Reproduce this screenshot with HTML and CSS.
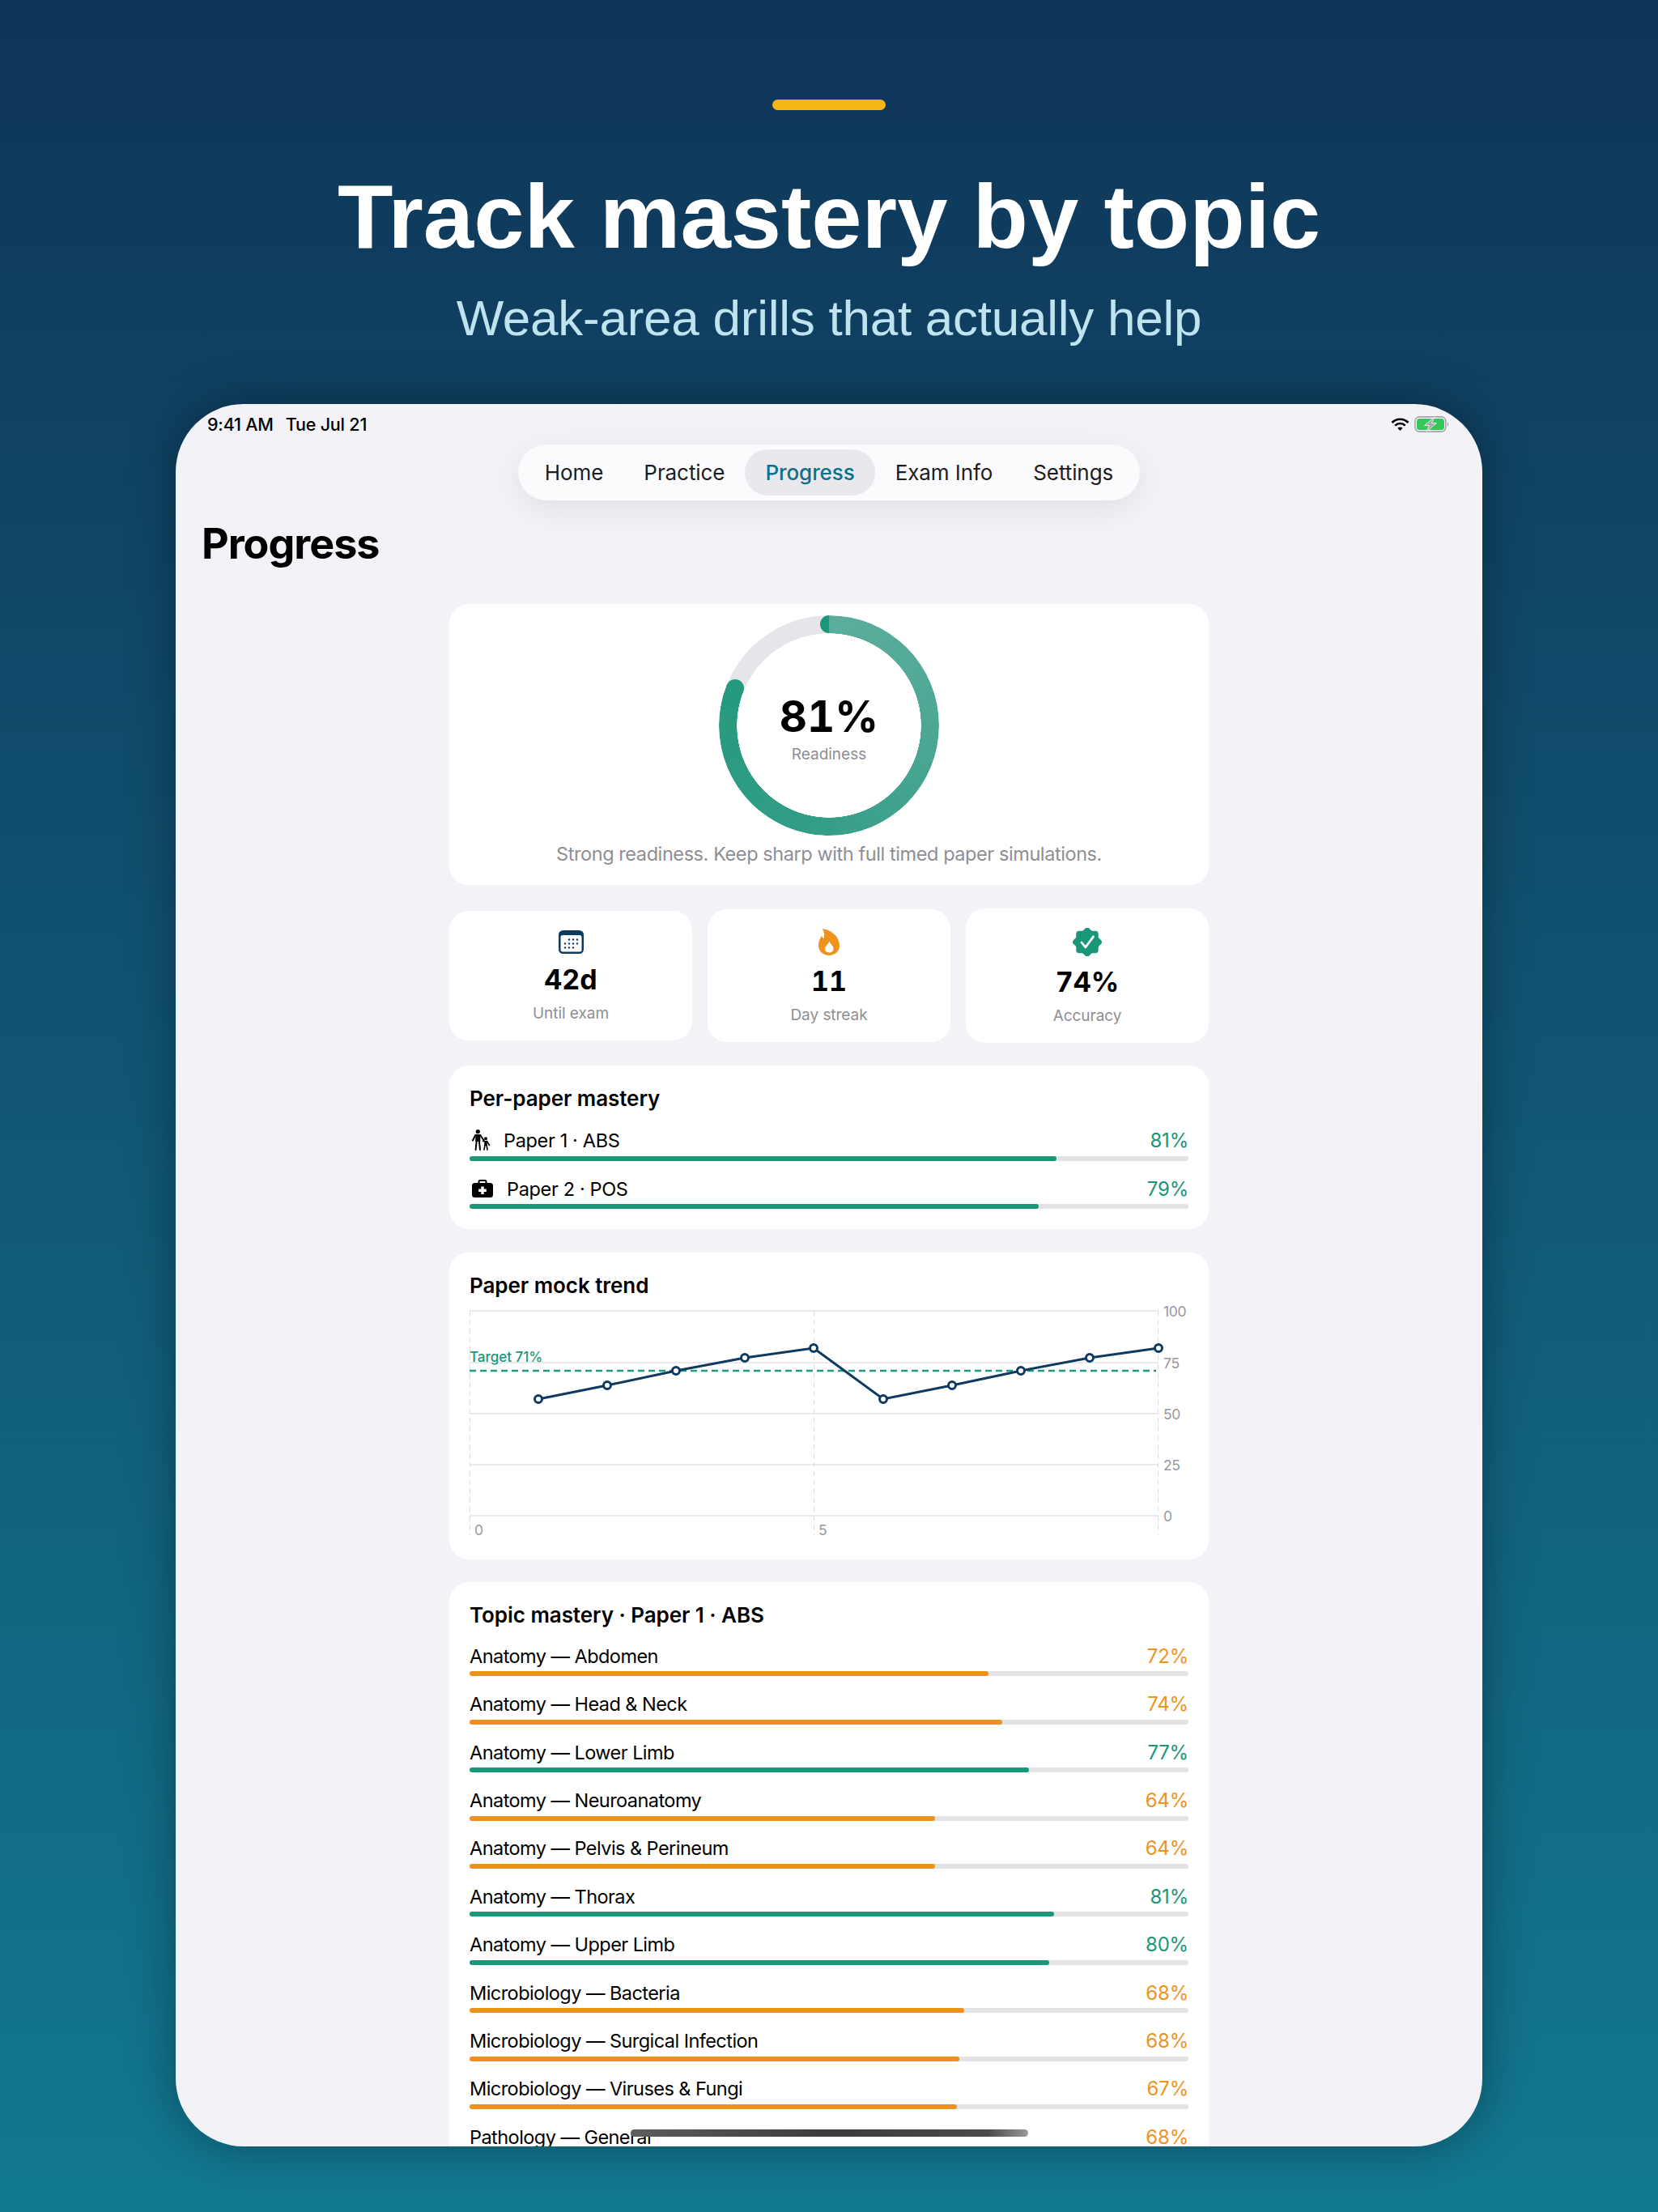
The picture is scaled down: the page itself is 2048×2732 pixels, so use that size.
FILE: index.html
```html
<!DOCTYPE html>
<html lang="en">
<head>
    <meta charset="UTF-8">
    <meta name="viewport" content="width=device-width, initial-scale=1.0">
    <title>Track mastery by topic</title>
    <link rel="stylesheet" href="styles.css">
</head>
<body>
    <header class="hero">
        <div class="accent-bar"></div>
        <h1>Track mastery by topic</h1>
        <p>Weak-area drills that actually help</p>
    </header>

    <main class="device">
        <div class="status-bar">
            <div class="status-time"><span>9:41 AM</span><span>Tue Jul 21</span></div>
            <div class="status-icons">
                <svg width="23" height="16" viewBox="0 0 23 16">
                    <path d="M1.5 6 A14 14 0 0 1 21.5 6" fill="none" stroke="#000" stroke-width="2.6"/>
                    <path d="M5.2 9.6 A9 9 0 0 1 17.8 9.6" fill="none" stroke="#000" stroke-width="2.6"/>
                    <path d="M11.5 16 L8.4 12.7 A4.4 4.4 0 0 1 14.6 12.7 Z" fill="#000"/>
                </svg>
                <svg width="43" height="20" viewBox="0 0 43 20">
                    <rect x="0.9" y="0.9" width="38" height="18.2" rx="5.5" fill="#fff" stroke="#a3a3a8" stroke-width="1.6"/>
                    <rect x="3" y="3" width="34" height="14" rx="3.5" fill="#34c759"/>
                    <path d="M41 7 q2 3 0 6 z" fill="#8e8e93"/>
                    <path d="M25 1 L12.5 11.5 H18.5 L15 19 L27.5 8.5 H21.5 Z" fill="#a8a8ad" stroke="#fff" stroke-width="0.8"/>
                </svg>
            </div>
        </div>

        <nav class="tabs">
            <a>Home</a>
            <a>Practice</a>
            <a class="active">Progress</a>
            <a>Exam Info</a>
            <a>Settings</a>
        </nav>

        <h2 class="page-title">Progress</h2>

        <div class="content">
            <section class="card readiness">
                <div class="ring">
                    <span class="cap-start"></span>
                    <span class="cap-end"></span>
                    <div class="ring-value">81%</div>
                    <div class="ring-label">Readiness</div>
                </div>
                <p class="readiness-note">Strong readiness. Keep sharp with full timed paper simulations.</p>
            </section>

            <div class="stats">
                <div class="card stat">
                    <svg class="stat-icon" width="31" height="29" viewBox="0 0 31 29">
                        <rect width="31" height="29" rx="5.5" fill="#0f3a5f"/>
                        <rect x="2.5" y="6" width="26" height="20.5" rx="2.5" fill="#fff"/>
                        <g fill="#0f3a5f">
                            <circle cx="13" cy="11.5" r="1.2"/><circle cx="18" cy="11.5" r="1.2"/><circle cx="23" cy="11.5" r="1.2"/>
                            <circle cx="8" cy="16.4" r="1.2"/><circle cx="13" cy="16.4" r="1.2"/><circle cx="18" cy="16.4" r="1.2"/><circle cx="23" cy="16.4" r="1.2"/>
                            <circle cx="8" cy="21.4" r="1.2"/><circle cx="13" cy="21.4" r="1.2"/><circle cx="18" cy="21.4" r="1.2"/>
                        </g>
                    </svg>
                    <div class="stat-value">42d</div>
                    <div class="stat-label">Until exam</div>
                </div>
                <div class="card stat">
                    <svg class="stat-icon" width="26" height="33" viewBox="0 0 26 33">
                        <path d="M4.5 0 C15 1.5 26 9 26 21 C26 28 20 33 13 33 C6 33 0 28 0 20.5 C0 15.5 2 12.5 3.5 9 C4.5 10.5 5.5 11.5 6.5 12 C7.5 8 7.5 4 4.5 0 Z" fill="#ef931f"/>
                        <path d="M13.5 15.5 C14 19 18.5 20.5 18.5 24.5 C18.5 27.5 16.5 29.5 13.3 29.5 C10 29.5 8 27.5 8 24.8 C8 21.5 12 19.5 13.5 15.5 Z" fill="#fff"/>
                    </svg>
                    <div class="stat-value">11</div>
                    <div class="stat-label">Day streak</div>
                </div>
                <div class="card stat">
                    <svg class="stat-icon" width="36" height="35" viewBox="0 0 36 35">
                        <g fill="#1a9678">
                            <rect x="4.25" y="3.75" width="27.5" height="27.5" rx="4"/>
                            <rect x="4.25" y="3.75" width="27.5" height="27.5" rx="4" transform="rotate(45 18 17.5)"/>
                        </g>
                        <path d="M11 18 L15.8 24 L25.5 10.8" fill="none" stroke="#fff" stroke-width="2.8" stroke-linecap="round" stroke-linejoin="round"/>
                    </svg>
                    <div class="stat-value">74%</div>
                    <div class="stat-label">Accuracy</div>
                </div>
            </div>

            <section class="card">
                <h3>Per-paper mastery</h3>
                <div class="meter meter-tall">
                    <div class="meter-head">
                        <span class="meter-name paper-name">
                            <svg class="paper-one" width="23" height="26" viewBox="0 0 23 26">
                                <circle cx="7.3" cy="2.6" r="2.6"/>
                                <path d="M4.4 6 H10.2 L10.4 15 H4.2 Z"/>
                                <path d="M4.2 7 L1 13.5 M10.4 7 L14.5 13.5 M5.7 14 L4.6 25 M8.9 14 L10 25" fill="none" stroke="#000" stroke-width="2" stroke-linecap="round"/>
                                <circle cx="17" cy="11.2" r="2"/>
                                <path d="M15.3 14 H18.7 V20 H15.3 Z"/>
                                <path d="M15.5 14.5 L13.6 14.5 M18.5 14.5 L21.5 19.5 M16 19 L15 25 M18 19 L19 25" fill="none" stroke="#000" stroke-width="1.6" stroke-linecap="round"/>
                            </svg>
                            Paper 1 · ABS
                        </span>
                        <span class="pct good">81%</span>
                    </div>
                    <div class="track"><div class="fill good" style="width: 81.6%"></div></div>
                </div>
                <div class="meter">
                    <div class="meter-head">
                        <span class="meter-name paper-name">
                            <svg class="paper-two" width="26" height="22" viewBox="0 0 26 22">
                                <path d="M8.5 5 V2.5 Q8.5 1 10 1 H16 Q17.5 1 17.5 2.5 V5" fill="none" stroke="#000" stroke-width="2"/>
                                <rect y="4" width="26" height="18" rx="3.5"/>
                                <path d="M11.3 8.5 H14.7 V11.5 H17.8 V14.9 H14.7 V18 H11.3 V14.9 H8.2 V11.5 H11.3 Z" fill="#fff"/>
                            </svg>
                            Paper 2 · POS
                        </span>
                        <span class="pct good">79%</span>
                    </div>
                    <div class="track"><div class="fill good" style="width: 79.2%"></div></div>
                </div>
            </section>

            <section class="card">
                <h3>Paper mock trend</h3>
                <svg class="trend" width="888" height="296" viewBox="0 -6 888 296">
                    <g class="grid-y">
                        <line x1="0" x2="851" y1="8" y2="8"/>
                        <line x1="0" x2="851" y1="72" y2="72"/>
                        <line x1="0" x2="851" y1="135" y2="135"/>
                        <line x1="0" x2="851" y1="198" y2="198"/>
                        <line x1="0" x2="851" y1="261" y2="261"/>
                    </g>
                    <g class="grid-x">
                        <line x1="0.5" x2="0.5" y1="8" y2="285"/>
                        <line x1="425.5" x2="425.5" y1="8" y2="285"/>
                        <line x1="850.5" x2="850.5" y1="8" y2="285"/>
                    </g>
                    <line class="target" x1="0" x2="848" y1="82" y2="82"/>
                    <text class="target-label" x="0" y="71">Target 71%</text>
                    <polyline class="trend-line" points="85,117 170,100 255,82 340,66 425,54 511,117 596,100 681,82 766,66 851,54"/>
                    <g class="trend-dots">
                        <circle cx="85" cy="117" r="4.5"/><circle cx="170" cy="100" r="4.5"/><circle cx="255" cy="82" r="4.5"/>
                        <circle cx="340" cy="66" r="4.5"/><circle cx="425" cy="54" r="4.5"/><circle cx="511" cy="117" r="4.5"/>
                        <circle cx="596" cy="100" r="4.5"/><circle cx="681" cy="82" r="4.5"/><circle cx="766" cy="66" r="4.5"/>
                        <circle cx="851" cy="54" r="4.5"/>
                    </g>
                    <g class="axis-label">
                        <text x="857" y="15">100</text>
                        <text x="857" y="79">75</text>
                        <text x="857" y="142">50</text>
                        <text x="857" y="205">25</text>
                        <text x="857" y="268">0</text>
                        <text x="6" y="285">0</text>
                        <text x="431" y="285">5</text>
                    </g>
                </svg>
            </section>

            <section class="card">
                <h3>Topic mastery · Paper 1 · ABS</h3>
                <div class="meter">
                    <div class="meter-head"><span class="meter-name">Anatomy — Abdomen</span><span class="pct warn">72%</span></div>
                    <div class="track"><div class="fill warn" style="width: 72.2%"></div></div>
                </div>
                <div class="meter">
                    <div class="meter-head"><span class="meter-name">Anatomy — Head &amp; Neck</span><span class="pct warn">74%</span></div>
                    <div class="track"><div class="fill warn" style="width: 74.1%"></div></div>
                </div>
                <div class="meter">
                    <div class="meter-head"><span class="meter-name">Anatomy — Lower Limb</span><span class="pct good">77%</span></div>
                    <div class="track"><div class="fill good" style="width: 77.8%"></div></div>
                </div>
                <div class="meter">
                    <div class="meter-head"><span class="meter-name">Anatomy — Neuroanatomy</span><span class="pct warn">64%</span></div>
                    <div class="track"><div class="fill warn" style="width: 64.7%"></div></div>
                </div>
                <div class="meter">
                    <div class="meter-head"><span class="meter-name">Anatomy — Pelvis &amp; Perineum</span><span class="pct warn">64%</span></div>
                    <div class="track"><div class="fill warn" style="width: 64.7%"></div></div>
                </div>
                <div class="meter">
                    <div class="meter-head"><span class="meter-name">Anatomy — Thorax</span><span class="pct good">81%</span></div>
                    <div class="track"><div class="fill good" style="width: 81.3%"></div></div>
                </div>
                <div class="meter">
                    <div class="meter-head"><span class="meter-name">Anatomy — Upper Limb</span><span class="pct good">80%</span></div>
                    <div class="track"><div class="fill good" style="width: 80.6%"></div></div>
                </div>
                <div class="meter">
                    <div class="meter-head"><span class="meter-name">Microbiology — Bacteria</span><span class="pct warn">68%</span></div>
                    <div class="track"><div class="fill warn" style="width: 68.8%"></div></div>
                </div>
                <div class="meter">
                    <div class="meter-head"><span class="meter-name">Microbiology — Surgical Infection</span><span class="pct warn">68%</span></div>
                    <div class="track"><div class="fill warn" style="width: 68.1%"></div></div>
                </div>
                <div class="meter">
                    <div class="meter-head"><span class="meter-name">Microbiology — Viruses &amp; Fungi</span><span class="pct warn">67%</span></div>
                    <div class="track"><div class="fill warn" style="width: 67.8%"></div></div>
                </div>
                <div class="meter">
                    <div class="meter-head"><span class="meter-name">Pathology — General</span><span class="pct warn">68%</span></div>
                    <div class="track"><div class="fill warn" style="width: 68%"></div></div>
                </div>
            </section>
        </div>

        <div class="home-indicator"></div>
    </main>
</body>
</html>
```

FILE: styles.css
```css
* {
    box-sizing: border-box;
}

body {
    margin: 0;
    width: 2048px;
    height: 2732px;
    overflow: hidden;
    display: flex;
    flex-direction: column;
    align-items: center;
    background: linear-gradient(180deg, #0f3558, #127891);
    font-family: 'Inter', 'Liberation Sans', sans-serif;
    color: #000;
}

.hero {
    display: flex;
    flex-direction: column;
    align-items: center;
    padding-top: 123px;
    font-family: 'Liberation Sans', Arial, sans-serif;
}

.accent-bar {
    width: 140px;
    height: 13px;
    border-radius: 7px;
    background: #f9b715;
}

.hero h1 {
    margin: 68px 0 0;
    font-size: 112px;
    line-height: 128px;
    font-weight: bold;
    color: #fff;
}

.hero p {
    margin: 25px 0 0;
    font-size: 62px;
    line-height: 72px;
    letter-spacing: -0.25px;
    color: #bfe3ef;
}

.device {
    position: relative;
    width: 1614px;
    height: 2152px;
    margin-top: 70px;
    border-radius: 84px;
    overflow: hidden;
    background: #f2f2f7;
}

/* shadow sits on a wrapper-less pseudo so the clip above doesn't eat it */
body::before {
    content: "";
    position: absolute;
    left: 217px;
    top: 499px;
    width: 1614px;
    height: 2152px;
    border-radius: 84px;
    box-shadow: 0 0 60px rgba(0, 0, 0, 0.35);
}

.status-bar {
    display: flex;
    justify-content: space-between;
    align-items: center;
    height: 50px;
    padding: 0 41px 0 39px;
}

.status-time {
    display: flex;
    gap: 15px;
    font-size: 21.5px;
    letter-spacing: -0.2px;
    font-weight: 500;
}

.status-icons {
    display: flex;
    align-items: center;
    gap: 6px;
}

.tabs {
    display: flex;
    width: max-content;
    height: 69px;
    margin: 0 auto;
    padding: 6px 8px;
    border-radius: 35px;
    background: #fbfbfd;
    box-shadow: 0 10px 40px rgba(0, 0, 0, 0.08);
    font-size: 26px;
    letter-spacing: -0.08px;
    color: #1c1c1e;
}

.tabs a {
    display: flex;
    align-items: center;
    padding: 0 25px;
    border-radius: 28px;
}

.tabs .active {
    background: #e9e9ed;
    color: #0e6f8c;
    font-weight: 500;
}

.page-title {
    margin: 24px 0 0 32px;
    font-size: 52px;
    line-height: 60px;
    letter-spacing: -1px;
    font-weight: 700;
}

.content {
    display: flex;
    flex-direction: column;
    gap: 28.5px;
    width: 938px;
    margin: 44px auto 0;
}

.card {
    padding: 25px;
    border-radius: 24px;
    background: #fff;
}

.card h3 {
    margin: 0 0 20px;
    font-size: 26px;
    line-height: 32px;
    letter-spacing: -0.05px;
    font-weight: 600;
}

.readiness {
    display: flex;
    flex-direction: column;
    align-items: center;
    padding: 14px 25px 23px;
}

.ring {
    position: relative;
    display: flex;
    flex-direction: column;
    align-items: center;
    justify-content: center;
    width: 272px;
    height: 272px;
    padding-top: 7px;
}

.ring::before {
    content: "";
    position: absolute;
    inset: 0;
    border-radius: 50%;
    background: conic-gradient(#5cae9c 0deg, #48a692 110deg, #339d86 190deg, #259a7f 291.6deg, #e5e5ea 291.6deg);
    -webkit-mask: radial-gradient(circle, transparent 113.5px, #000 114px);
    mask: radial-gradient(circle, transparent 113.5px, #000 114px);
}

.cap-start {
    position: absolute;
    left: 125px;
    top: 0;
    width: 11px;
    height: 22px;
    border-radius: 11px 0 0 11px;
    background: #1a9678;
}

.cap-end {
    position: absolute;
    left: 9px;
    top: 79px;
    width: 22px;
    height: 22px;
    border-radius: 50%;
    background: #259a7f;
}

.ring-value {
    font-size: 53px;
    line-height: 60px;
    font-weight: 700;
    font-variant-numeric: tabular-nums;
}

.ring-label {
    margin-top: 5px;
    font-size: 19px;
    line-height: 24px;
    color: #8e8e93;
}

.readiness-note {
    margin: 8px 0 0;
    font-size: 23.5px;
    line-height: 30px;
    letter-spacing: -0.42px;
    color: #8e8e93;
}

.stats {
    display: flex;
    align-items: center;
    gap: 19px;
}

.stat {
    flex: 1;
    display: flex;
    flex-direction: column;
    align-items: center;
    padding: 24px 0 21px;
}

.stat-icon {
    display: block;
}

.stat-value {
    margin-top: 14.5px;
    font-size: 34px;
    line-height: 36px;
    font-weight: 700;
    font-variant-numeric: tabular-nums;
}

.stat-label {
    margin-top: 11.5px;
    font-size: 19px;
    line-height: 24px;
    letter-spacing: -0.05px;
    color: #8e8e93;
}

.meter {
    margin-bottom: 20.4px;
}

.meter:last-child {
    margin-bottom: 0;
}

.meter-head {
    display: flex;
    justify-content: space-between;
    align-items: center;
    height: 28px;
    margin-bottom: 5px;
    font-size: 23.5px;
}

.meter-tall .meter-head {
    height: 30px;
}

.meter-name {
    display: flex;
    align-items: center;
    letter-spacing: -0.55px;
}

.paper-name {
    letter-spacing: -0.35px;
}

.paper-one {
    margin: 0 16px 0 3px;
}

.paper-two {
    margin: 0 17px 0 3px;
}

.pct {
    font-size: 24px;
    letter-spacing: -0.2px;
}

.pct.good {
    color: #1a9678;
}

.pct.warn {
    color: #ef931f;
}

.track {
    height: 6px;
    border-radius: 3px;
    background: #e3e3e5;
}

.fill {
    height: 6px;
    border-radius: 3px;
}

.fill.good {
    background: #1a9678;
}

.fill.warn {
    background: #ec9120;
}

.trend {
    display: block;
    margin-top: -19px;
    overflow: visible;
}

.grid-y line {
    stroke: #e3e3e6;
    stroke-width: 1.6;
}

.grid-x line {
    stroke: #dcdce0;
    stroke-width: 1;
    stroke-dasharray: 6 5;
}

.target {
    stroke: #1f9c80;
    stroke-width: 2.4;
    stroke-dasharray: 8 5;
}

.target-label {
    font-size: 17px;
    font-weight: 500;
    fill: #1a9678;
}

.trend-line {
    fill: none;
    stroke: #0f3a5f;
    stroke-width: 3;
}

.trend-dots circle {
    fill: #fff;
    stroke: #0f3a5f;
    stroke-width: 3;
}

.axis-label text {
    font-size: 17.5px;
    letter-spacing: -0.3px;
    fill: #98989d;
}

.home-indicator {
    position: absolute;
    left: 562px;
    top: 2131px;
    width: 491px;
    height: 9px;
    border-radius: 5px;
    background: linear-gradient(90deg, #5d5d5d, #3c3c3c 50%, #4a4a4a 90%, #9a9a9a);
}
```
